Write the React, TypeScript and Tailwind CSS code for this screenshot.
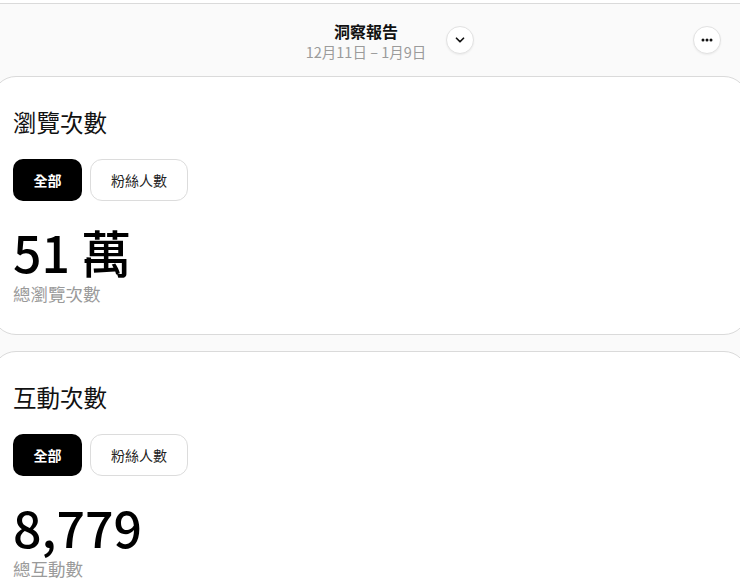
import { ChevronDown } from 'lucide-react';

const font = { fontFamily: '"Noto Sans CJK TC", "Noto Sans", sans-serif' };

function StatCard({ title, value, caption }: { title: string; value: string; caption: string }) {
  return (
    <section className="-ml-[8px] w-[756px] shrink-0 rounded-[24px] border border-[#dadada] bg-white pl-[20px] pt-[30px] pb-[29px]">
      <h2 className="text-[23.5px] leading-[30px] font-normal text-[#111]">{title}</h2>
      <div className="mt-[22px] flex gap-[8px]">
        <button className="h-[42px] w-[69px] rounded-[10px] bg-black text-[14px] font-bold text-white">全部</button>
        <button className="h-[42px] w-[98px] rounded-[12px] border border-[#dcdcdc] bg-white text-[14px] text-[#222]">
          粉絲人數
        </button>
      </div>
      <div className="mt-[24px] text-[50px] leading-[52px] font-medium text-black">{value}</div>
      <div className="mt-[6px] text-[17.5px] leading-[22px] text-[#9a9a9a]">{caption}</div>
    </section>
  );
}

export default function App() {
  return (
    <div className="h-[587px] w-[740px] overflow-hidden bg-[#fafafa]" style={font}>
      <div className="h-[3px] bg-white" />
      {/* Header */}
      <header className="grid h-[73px] grid-cols-[1fr_auto_1fr] items-center border-t border-[#dadada]">
        <div />
        <div className="flex flex-col items-center pr-[8px] pt-[2px]">
          <div className="text-[16px] leading-[20px] font-bold text-[#111]">洞察報告</div>
          <div className="mt-[2px] text-[14.5px] leading-[18px] text-[#9b9b9b]">12月11日 – 1月9日</div>
        </div>
        <div className="flex items-center justify-between pl-[12px] pr-[19px]">
          <button className="flex h-[28px] w-[28px] items-center justify-center rounded-full border border-[#e2e2e2] bg-white shadow-[0_1px_2px_rgba(0,0,0,0.06)]">
            <ChevronDown size={14} strokeWidth={3} className="text-[#111]" />
          </button>
          <button className="flex h-[28px] w-[28px] items-center justify-center rounded-full border border-[#e2e2e2] bg-white shadow-[0_1px_2px_rgba(0,0,0,0.06)]">
            <svg width="12" height="4" viewBox="0 0 12 4">
              <circle cx="2" cy="2" r="1.5" fill="#111" />
              <circle cx="6" cy="2" r="1.5" fill="#111" />
              <circle cx="10" cy="2" r="1.5" fill="#111" />
            </svg>
          </button>
        </div>
      </header>

      <div className="flex flex-col gap-[16px]">
        <StatCard title="瀏覽次數" value="51 萬" caption="總瀏覽次數" />
        <StatCard title="互動次數" value="8,779" caption="總互動數" />
      </div>
    </div>
  );
}
